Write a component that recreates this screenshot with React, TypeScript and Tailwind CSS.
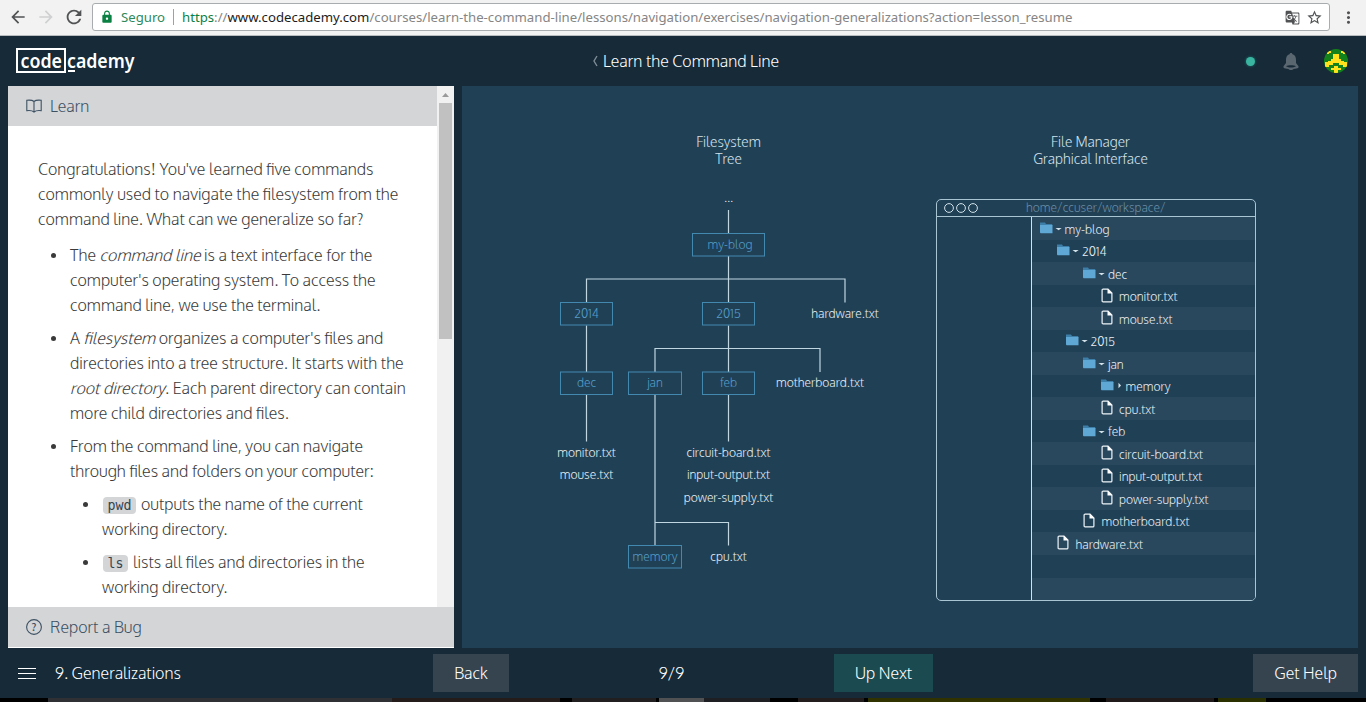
import type { ReactNode } from "react";
import {
  MdArrowBack,
  MdArrowForward,
  MdGTranslate,
  MdLock,
  MdMoreVert,
  MdRefresh,
  MdStarBorder,
} from "react-icons/md";

function BrowserBar() {
  return (
    <div className="flex h-9 shrink-0 items-center border-b border-[#b8bcbf] bg-[#f2f2f2] font-['Noto_Sans','Open_Sans',sans-serif] text-[13.19px] font-normal text-[#858585]">
      <div className="flex w-[92px] shrink-0 items-center pb-0.5 pl-2">
        <MdArrowBack className="size-5 text-[#505254]" />
        <MdArrowForward className="ml-2 size-5 text-[#cfd0d1]" />
        <MdRefresh className="ml-[7px] size-[22px] text-[#505254]" />
      </div>
      <div className="mb-px flex h-7 w-[1238px] items-center whitespace-nowrap rounded-[3px] border border-[#a9acae] bg-white">
        <MdLock className="ml-[7px] size-[14px] text-[#0b8043]" />
        <span className="ml-[7px] w-[44px] pt-px text-[#2f8a5a]">Seguro</span>
        <span className="ml-2 h-4 w-px bg-[#a0a0a0]" />
        <span className="ml-2 pt-px">
          <span className="text-[#0b8043]">https</span>://
          <span className="text-[#1c1c1c]">www.codecademy.com</span>
          /courses/learn-the-command-line/lessons/navigation/exercises/navigation-generalizations?action=lesson_resume
        </span>
        <MdGTranslate className="ml-auto size-[15px] text-[#505254]" />
        <MdStarBorder className="ml-1.5 mr-1.5 size-[17px] text-[#505254]" />
      </div>
      <MdMoreVert className="ml-[9px] size-[19px] shrink-0 text-[#505254]" />
    </div>
  );
}

function Logo() {
  return (
    <svg width="130" height="40" viewBox="0 -6 130 40" className="shrink-0">
      <rect x="1" y="2" width="48" height="23" fill="none" stroke="#fff" strokeWidth="2" />
      <g fill="#fff" className="font-['Noto_Sans','Open_Sans',sans-serif] text-[19px] font-semibold">
        <text x="4.500" y="20.500" textLength="41.500" lengthAdjust="spacingAndGlyphs">code</text>
        <text x="51" y="20.500" textLength="67.500" lengthAdjust="spacingAndGlyphs">cademy</text>
      </g>
      <rect x="52" y="23" width="7" height="2" fill="#fff" />
    </svg>
  );
}

function Avatar() {
  return (
    <svg width="24" height="24" viewBox="0 0 24 24">
      <defs>
        <clipPath id="round">
          <circle cx="12" cy="12" r="12" />
        </clipPath>
      </defs>
      <g clipPath="url(#round)">
        <rect width="24" height="24" fill="#14821a" />
        <path
          fill="#ffe21c"
          d="M3 2h4v2H5v1H3zM17 2h4v3h-2V4h-2zM9 5h6v5h2v2h3v1h3v5h-4v-2h-4v-2H9v2H5v2H1v-5h3v-1h3v-2h2zM10 17h4v2h3v2h-3v3h-4v-3H7v-2h3z"
        />
      </g>
    </svg>
  );
}

function Header() {
  return (
    <header className="grid h-[50px] shrink-0 grid-cols-3 items-center px-4">
      <Logo />
      <div className="flex items-center justify-center pl-[5px]">
        <svg width="6" height="12" viewBox="0 0 6 12" className="mr-[5px] shrink-0">
          <path d="M5 1 2 6l3 5" fill="none" stroke="#7f8d98" strokeWidth="1.4" />
        </svg>
        <span className="whitespace-nowrap text-white">Learn the Command Line</span>
      </div>
      <div className="flex items-center justify-end pr-0.5">
        <span className="size-[9px] rounded-full bg-[#39b5a2] shadow-[0_0_3px_#23776f]" />
        <svg width="16" height="17" viewBox="0 0 16 17" className="ml-7">
          <path
            fill="#5a6771"
            fillRule="evenodd"
            d="M8 0c1 0 1.300.6 1.500 1.300C12 2 13 4 13 7v3l2.500 3.200v1.300c-1 1-2.800 1.300-5 1.500C10 16.700 9 17 8 17s-2-.3-2.500-1C3.300 15.800 1.500 15.500.5 14.500v-1.300L3 10V7c0-3 1-5 3.500-5.700C6.700.6 7 0 8 0zM3 13.300c1.500 1 3 1.200 5 1.200s3.500-.2 5-1.200c-1-.8-3-1.100-5-1.100s-4 .3-5 1.100z"
          />
        </svg>
        <span className="ml-[25px]">
          <Avatar />
        </span>
      </div>
    </header>
  );
}

function Item({ children }: { children: ReactNode }) {
  return (
    <li className="relative mt-2 before:absolute before:-left-[19px] before:top-[10px] before:size-[5px] before:rounded-full before:bg-[#3a3a3a]">
      {children}
    </li>
  );
}

function Code({ children }: { children: ReactNode }) {
  return (
    <code className="ml-px mr-[5px] rounded-sm bg-[#d4d5d7] px-[4.5px] py-px font-['DejaVu_Sans_Mono','Noto_Sans',monospace] text-[13.3px] leading-none text-[#34434f]">
      {children}
    </code>
  );
}

function Lesson() {
  return (
    <section className="flex w-[446px] shrink-0 flex-col bg-white">
      <div className="flex h-[521px]">
        <div className="w-[429px] overflow-hidden whitespace-nowrap">
          <div className="flex h-10 items-center bg-[#d4d5d7] pl-[18px] text-[#3d5163]">
            <svg width="16" height="14" viewBox="0 0 16 14" fill="none" stroke="#3d5163" strokeWidth="1.1">
              <path d="M8 2.500C6.500 1.200 3.500 1 .8 1.300v10.400c2.700-.3 5.700 0 7.200 1.300 1.500-1.300 4.500-1.600 7.200-1.300V1.300C12.500 1 9.500 1.200 8 2.500zM8 2.500V13" />
            </svg>
            <span className="ml-2">Learn</span>
          </div>
          <div className="pl-[30px] pt-[31px] leading-[25px] text-[#3b3b3b]">
            <p className="mb-[11px]">
              Congratulations! You've learned five commands
              <br />
              commonly used to navigate the filesystem from the
              <br />
              command line. What can we generalize so far?
            </p>
            <ul className="-mt-2 pl-8 pt-2 [&>li:first-child]:mt-0">
              <Item>
                The <em>command line</em> is a text interface for the
                <br />
                computer's operating system. To access the
                <br />
                command line, we use the terminal.
              </Item>
              <Item>
                A <em>filesystem</em> organizes a computer's files and
                <br />
                directories into a tree structure. It starts with the
                <br />
                <em>root directory</em>. Each parent directory can contain
                <br />
                more child directories and files.
              </Item>
              <Item>
                From the command line, you can navigate
                <br />
                through files and folders on your computer:
                <ul className="pl-8">
                  <Item>
                    <Code>pwd</Code>outputs the name of the current
                    <br />
                    working directory.
                  </Item>
                  <Item>
                    <Code>ls</Code>lists all files and directories in the
                    <br />
                    working directory.
                  </Item>
                </ul>
              </Item>
            </ul>
          </div>
        </div>
        <div className="flex w-[17px] flex-col items-center bg-[#f1f1f1]">
          <svg width="17" height="17" viewBox="0 0 17 17">
            <path d="M5 11h7L8.500 7z" fill="#9a9a9a" />
          </svg>
          <div className="h-[236px] w-[13px] bg-[#c1c1c1]" />
        </div>
      </div>
      <div className="flex h-10 items-center bg-[#d4d5d7] pl-[18px] text-[#3d5163]">
        <svg width="16" height="16" viewBox="0 0 16 16">
          <circle cx="8" cy="8" r="7.400" fill="none" stroke="#3d5163" strokeWidth="1.100" />
          <text x="8" y="11.800" textAnchor="middle" fill="#3d5163" className="text-[11px] font-bold">?</text>
        </svg>
        <span className="ml-2">Report a Bug</span>
      </div>
    </section>
  );
}

const treeBoxes: [string, number, number, number, number][] = [
  ["my-blog", 692.5, 233.5, 72, 730],
  ["2014", 560.5, 302.5, 52, 586.5],
  ["2015", 702.5, 302.5, 52, 728.5],
  ["dec", 560.5, 372, 52, 586.5],
  ["jan", 628.5, 372, 53, 655],
  ["feb", 702.5, 372, 52, 728.5],
  ["memory", 628.5, 545.5, 53, 655],
];

const treeFiles: [string, number, number][] = [
  ["...", 728.5, 202],
  ["hardware.txt", 845, 318],
  ["motherboard.txt", 820, 387],
  ["monitor.txt", 586.5, 457],
  ["mouse.txt", 586.5, 479],
  ["circuit-board.txt", 728.5, 457],
  ["input-output.txt", 728.5, 479],
  ["power-supply.txt", 728.5, 502],
  ["cpu.txt", 728.5, 561],
];

function FilesystemTree() {
  return (
    <svg width="474" height="562" viewBox="462 86 474 562" className="shrink-0 text-[12.15px]" textAnchor="middle">
      <g fill="#d3e2ea" className="text-[13.8px]">
        <text x="728.5" y="147">Filesystem</text>
        <text x="728.5" y="164">Tree</text>
      </g>
      <path
        fill="none"
        stroke="#c0d6e1"
        strokeWidth="1.200"
        d="M728.500 210v23.500M728.500 256v46.500M586.500 302.500v-23.500H845v23.500M728.500 325.500V372M586.500 325.500V372M655 372v-23.500h165V372M586.500 394.500v47M728.500 394.500v47M655 394.500v151M655 522.500h73.500v23"
      />
      {treeBoxes.map(([name, x, y, w, cx]) => (
        <g key={name}>
          <rect x={x} y={y} width={w} height="22.5" fill="none" stroke="#4389af" />
          <text x={cx} y={y + 15.2} fill="#559dc6">{name}</text>
        </g>
      ))}
      <g fill="#e6f0f5">
        {treeFiles.map(([name, x, y]) => (
          <text key={name} x={x} y={y}>{name}</text>
        ))}
      </g>
    </svg>
  );
}

type Row = { name: string; kind: "open" | "closed" | "file"; pad: string };

const rows: Row[] = [
  { name: "my-blog", kind: "open", pad: "pl-[7.5px]" },
  { name: "2014", kind: "open", pad: "pl-[25px]" },
  { name: "dec", kind: "open", pad: "pl-[51px]" },
  { name: "monitor.txt", kind: "file", pad: "pl-[68.5px]" },
  { name: "mouse.txt", kind: "file", pad: "pl-[68.5px]" },
  { name: "2015", kind: "open", pad: "pl-[33.5px]" },
  { name: "jan", kind: "open", pad: "pl-[51px]" },
  { name: "memory", kind: "closed", pad: "pl-[68.5px]" },
  { name: "cpu.txt", kind: "file", pad: "pl-[68.5px]" },
  { name: "feb", kind: "open", pad: "pl-[51px]" },
  { name: "circuit-board.txt", kind: "file", pad: "pl-[68.5px]" },
  { name: "input-output.txt", kind: "file", pad: "pl-[68.5px]" },
  { name: "power-supply.txt", kind: "file", pad: "pl-[68.5px]" },
  { name: "motherboard.txt", kind: "file", pad: "pl-[51px]" },
  { name: "hardware.txt", kind: "file", pad: "pl-[25px]" },
  { name: "", kind: "file", pad: "" },
  { name: "", kind: "file", pad: "" },
];

function RowIcon({ kind }: { kind: Row["kind"] }) {
  if (kind === "file") {
    return (
      <svg width="18.500" height="15" viewBox="0 0 18.500 15" className="mb-[1.5px] shrink-0">
        <path d="M1.100 2.100a1 1 0 0 1 1-1H7l3.900 4v7.800a1 1 0 0 1-1 1H2.100a1 1 0 0 1-1-1z" fill="none" stroke="#f0f6f9" strokeWidth="1.200" />
        <path d="M6.500.8v4.800h4.800z" fill="#fff" />
      </svg>
    );
  }
  return (
    <svg width="25" height="12" viewBox="0 0 25 12" className="mb-px shrink-0">
      <path d="M0 .5h5L6 2h6.200V4H0z" fill="#3d7fa8" />
      <path d="M0 3h12.500v8.200H.6L0 10.600z" fill="#5fa8d6" />
      {kind === "open" ? (
        <path d="M15.500 6h6.200L18.600 8.200z" fill="#d3e2ea" />
      ) : (
        <path d="M17.500 3.800v5.400L20 6.500z" fill="#d3e2ea" />
      )}
    </svg>
  );
}

function FileManager() {
  return (
    <div className="flex w-80 flex-col pt-[48px]">
      <div className="mr-[11px] text-center text-[13.8px] leading-[16.5px] text-[#d3e2ea]">
        File Manager
        <br />
        Graphical Interface
      </div>
      <div className="mt-[32px] flex h-[402px] flex-col overflow-hidden rounded-[5px] border border-[#a9c4d2] text-[12.15px]">
        <div className="flex h-[17px] shrink-0 items-center border-b border-[#a9c4d2] pl-[7px]">
          <svg width="36" height="12" viewBox="0 0 36 12" fill="none" stroke="#d3e2ea">
            <circle cx="5" cy="6" r="4.400" />
            <circle cx="17" cy="6" r="4.400" />
            <circle cx="29" cy="6" r="4.400" />
          </svg>
          <span className="ml-[46px] leading-4 text-[#6a8da4]">home/ccuser/workspace/</span>
        </div>
        <div className="flex grow">
          <div className="w-[94px] shrink-0" />
          <div className="grow border-l border-[#d3e2ea]">
            {rows.map((row, i) => (
              <div
                key={i}
                className={`flex h-[22.54px] items-center leading-4 text-[#e6f0f5] odd:bg-[#29475d] ${row.pad}`}
              >
                {row.name && <RowIcon kind={row.kind} />}
                <span className="pt-[2.6px]">{row.name}</span>
              </div>
            ))}
          </div>
        </div>
      </div>
    </div>
  );
}

function Footer() {
  return (
    <footer className="flex h-[50px] shrink-0 items-center pr-2 text-white">
      <div className="ml-[18px] flex w-[18px] flex-col gap-1">
        <span className="h-px bg-white" />
        <span className="h-px bg-white" />
        <span className="h-px bg-white" />
      </div>
      <span className="ml-[19px] w-[378px]">9. Generalizations</span>
      <button className="h-[38px] w-[76px] bg-[#364450]">Back</button>
      <span className="w-[325px] text-center">9/9</span>
      <button className="h-[38px] w-[99px] bg-[#1b4b50]">Up Next</button>
      <button className="ml-auto h-[38px] w-[105px] bg-[#364450]">Get Help</button>
    </footer>
  );
}

function BottomStrip() {
  return (
    <div className="flex h-1 shrink-0 bg-black">
      <span className="w-12 bg-black" />
      <span className="w-[344px] bg-[#2f3033]" />
      <span className="w-[168px] bg-[#241c1b]" />
      <span className="w-3 bg-black" />
      <span className="w-[84px] bg-[#211f20]" />
      <span className="ml-[3px] w-[45px] bg-[#505152]" />
      <span className="w-[66px] bg-[#1e1f22]" />
      <span className="ml-7 w-[66px] bg-[#241d1e]" />
      <span className="ml-1 w-[222px] bg-[#303300]" />
      <span className="ml-4 w-[108px] bg-[#201a1a]" />
      <span className="ml-1 w-[48px] bg-[#2b3000]" />
    </div>
  );
}

export default function App() {
  return (
    <div className="flex h-[702px] w-[1366px] flex-col overflow-hidden bg-[#162a38] font-['Oxygen','Noto_Sans','Open_Sans',sans-serif] text-base font-light">
      <BrowserBar />
      <Header />
      <main className="flex h-[562px] shrink-0 gap-2 px-2">
        <Lesson />
        <section className="flex grow bg-[#204056]">
          <FilesystemTree />
          <FileManager />
        </section>
      </main>
      <Footer />
      <BottomStrip />
    </div>
  );
}
